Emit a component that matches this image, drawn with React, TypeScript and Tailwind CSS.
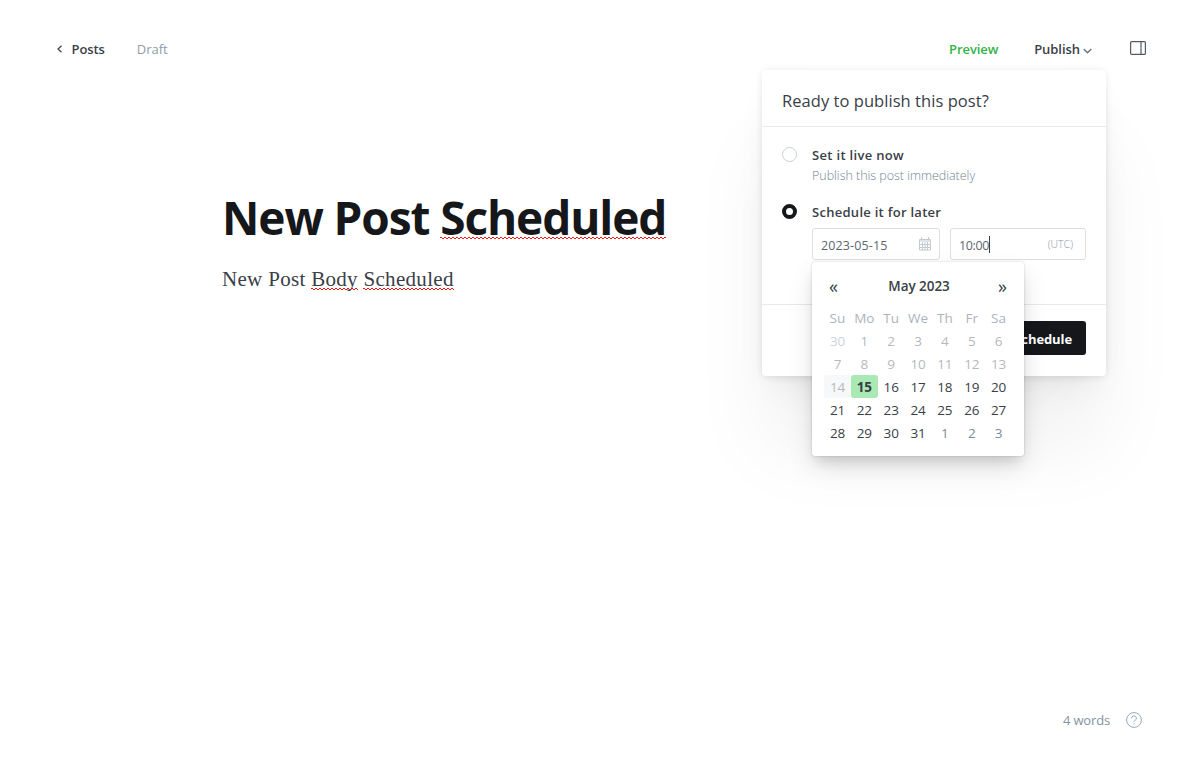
import React from "react";

const weekdays = ["Su", "Mo", "Tu", "We", "Th", "Fr", "Sa"];

type Day = { n: number; kind: "prev" | "past" | "today" | "selected" | "open" | "next" };

const days: Day[] = [
  { n: 30, kind: "prev" },
  ...Array.from({ length: 31 }, (_, i): Day => {
    const n = i + 1;
    if (n < 14) return { n, kind: "past" };
    if (n === 14) return { n, kind: "today" };
    if (n === 15) return { n, kind: "selected" };
    return { n, kind: "open" };
  }),
  { n: 1, kind: "next" },
  { n: 2, kind: "next" },
  { n: 3, kind: "next" },
];

const dayStyles: Record<Day["kind"], string> = {
  prev: "text-[#ced4d9]",
  past: "text-[#b5b9bc]",
  today: "rounded-l-[3px] bg-[#f7f8f9] text-[#b5b9bc]",
  selected: "rounded-[3px] bg-[#abe9b4] font-bold",
  open: "",
  next: "text-[#7c8b9a]",
};

const squiggle =
  "inline-block bg-[linear-gradient(90deg,#f01818_50%,transparent_50%),linear-gradient(90deg,#f01818_50%,transparent_50%)] bg-[length:4px_1px,4px_1px] bg-repeat-x";

function Calendar() {
  return (
    <div className="absolute left-0 top-[34px] h-[194px] w-[212px] rounded-[3px] bg-white px-3 pt-3 text-[#394047] shadow-[0_0_2px_rgba(0,0,0,0.22),0_8px_12px_-3px_rgba(0,0,0,0.12),0_12px_28px_-2px_rgba(0,0,0,0.12)]">
      <div className="flex h-[24px] items-center justify-between pl-[5px] pr-[3px]">
        <span className="w-[11px] text-[18px] leading-[24px]">«</span>
        <span className="text-[13.5px] font-semibold leading-[24px] tracking-[-0.05px]">May 2023</span>
        <span className="w-[11px] text-[18px] leading-[24px]">»</span>
      </div>
      <div className="mt-[9px] grid h-[22px] grid-cols-7 text-center text-[13.5px] leading-[22px] text-[#abb4be]">
        {weekdays.map((d) => (
          <span key={d}>{d}</span>
        ))}
      </div>
      <div className="grid grid-cols-7 text-center text-[13.5px] leading-[25px] tracking-[-0.2px]">
        {days.map((d, i) => (
          <span key={i} className={"h-[23px] " + dayStyles[d.kind]}>
            {d.n}
          </span>
        ))}
      </div>
    </div>
  );
}

function CalendarIcon() {
  return (
    <svg className="mb-px h-[14px] w-[12px]" viewBox="0 0 12 14" fill="none" stroke="#c3cbd2" strokeWidth="1">
      <path d="M.5 2.500h11v10.500H.5zM.5 4.500h11M3.500 4.500v9M6 4.500v9M8.500 4.500v9M.5 7.500h11M.5 10.500h11M2.500 0v3M9.500 0v3" />
      <path d="M1 3h10v2H1z" fill="#dfe4e8" stroke="none" />
    </svg>
  );
}

function PublishMenu() {
  return (
    <div className="absolute right-[-14px] top-[34px] flex h-[306px] w-[344px] flex-col rounded-[4px] bg-white text-[#394047] shadow-[0_0_7px_rgba(0,0,0,0.08),0_4px_12px_-3px_rgba(0,0,0,0.06),0_18px_36px_-12px_rgba(0,0,0,0.08),0_75px_80px_rgba(0,0,0,0.05)]">
      <div className="h-[57px] border-b border-[#e9ecee] px-5 pt-[19px]">
        <h2 className="whitespace-nowrap text-[16.5px] font-normal leading-[24px] tracking-[0.05px]">
          Ready to publish this post?
        </h2>
      </div>
      <div className="h-[178px] border-b border-[#e4e9ee] px-5 pt-5">
        <div className="flex gap-[15px]">
          <span className="h-[15px] w-[15px] shrink-0 rounded-full border border-[#c8d0d8]" />
          <div>
            <div className="text-[13px] font-semibold leading-[17px] tracking-[0.32px]">Set it live now</div>
            <div className="mt-[3px] whitespace-nowrap text-[12.5px] font-light leading-[17px] tracking-[-0.03px] text-[#738394]">
              Publish this post immediately
            </div>
          </div>
        </div>
        <div className="mt-5 flex gap-[15px]">
          <span className="h-[15px] w-[15px] shrink-0 rounded-full border-4 border-[#15171a]" />
          <div>
            <div className="text-[13px] font-semibold leading-[17px] tracking-[0.28px]">Schedule it for later</div>
            <div className="relative mt-[7px] flex gap-[10px]">
              <div className="flex h-8 w-[128px] items-center justify-between rounded-[3px] border border-[#dddfe2] pl-2 pr-2 text-[12.5px] text-[#5d6670]">
                <span className="pt-[5px] tracking-[0.12px]">2023-05-15</span>
                <CalendarIcon />
              </div>
              <div className="flex h-8 w-[136px] items-center justify-between rounded-[3px] border border-[#dddfe2] pl-2 pr-3 text-[12.5px] text-[#5d6670]">
                <span className="flex items-center">
                  <span className="pt-[5px] tracking-[-0.4px]">10:00</span>
                  <span className="h-[17px] w-px bg-[#394047]" />
                </span>
                <span className="pt-px text-[10.5px] font-light text-[#8996a3]">(UTC)</span>
              </div>
              <Calendar />
            </div>
          </div>
        </div>
      </div>
      <div className="flex justify-end px-5 pt-4">
        <button className="h-[34px] rounded-[3px] bg-[#15171a] px-[14px] pt-[3px] text-[13px] font-bold tracking-[-0.1px] text-white">
          Schedule
        </button>
      </div>
    </div>
  );
}

export default function App() {
  return (
    <div className="flex h-[767px] w-[1184px] flex-col overflow-hidden bg-white font-['Open_Sans','Noto_Sans',sans-serif]">
      <header className="flex h-[96px] shrink-0 items-center justify-between pl-[56px] pr-[38px] text-[13px]">
        <div className="flex items-center">
          <svg className="mt-px h-2 w-[7px]" viewBox="0 0 7 8" fill="none" stroke="#394047" strokeWidth="1.2">
            <path d="M5.500.7 2 4l3.500 3.300" />
          </svg>
          <span className="ml-[8.5px] pt-[3px] font-semibold tracking-[-0.1px] text-[#394047]">Posts</span>
          <span className="ml-8 pt-[3px] text-[#8e9cac]">Draft</span>
        </div>
        <div className="flex items-center">
          <span className="pt-[3px] font-semibold tracking-[-0.1px] text-[#30b24a]">Preview</span>
          <div className="relative z-10 ml-9 flex h-6 items-center">
            <span className="pt-[3px] font-semibold tracking-[-0.05px] text-[#394047]">Publish</span>
            <svg className="ml-[3px] mt-[5px] h-[6px] w-[9px]" viewBox="0 0 9 6" fill="none" stroke="#6b747c" strokeWidth="1.4">
              <path d="m.7.9 3.800 3.800L8.300.9" />
            </svg>
            <PublishMenu />
          </div>
          <svg className="ml-[38px] h-[14px] w-4" viewBox="0 0 16 14" fill="none" stroke="#535c65">
            <rect x=".6" y=".6" width="14.800" height="12.800" rx="1" strokeWidth="1.2" />
            <path d="M11 .5v13" strokeWidth="1.2" />
          </svg>
        </div>
      </header>
      <main className="flex-1 pl-[222px] pt-[91px]">
        <h1 className="h-[60px] whitespace-nowrap text-[46px] font-bold leading-[60px] tracking-[-1.1px] text-[#15171a]">
          New Post <span className={squiggle + " h-[60px] bg-[position:0_50px,2px_51px]"}>Scheduled</span>
        </h1>
        <p className="mt-[16px] h-8 whitespace-nowrap font-['Georgia','Liberation_Serif',serif] text-[21px] leading-[32px] tracking-[0.31px] text-[#394047]">
          New Post <span className={squiggle + " h-8 bg-[position:0_25px,2px_26px]"}>Body</span>{" "}
          <span className={squiggle + " h-8 bg-[position:0_25px,2px_26px]"}>Scheduled</span>
        </p>
      </main>
      <footer className="mb-4 flex h-[62px] shrink-0 items-center justify-end pr-[42px] text-[13px] text-[#8393a3]">
        <span className="mr-4 pt-[2px] tracking-[-0.15px]">4 words</span>
        <svg className="h-4 w-4" viewBox="0 0 16 16" fill="none" stroke="#98a6b5">
          <circle cx="8" cy="8" r="7.4" />
          <path d="M5.600 6.300a2.400 2.400 0 1 1 3.500 2.100C8.300 8.800 8 9.100 8 10.200M8 11.400v1.100" />
        </svg>
      </footer>
    </div>
  );
}
